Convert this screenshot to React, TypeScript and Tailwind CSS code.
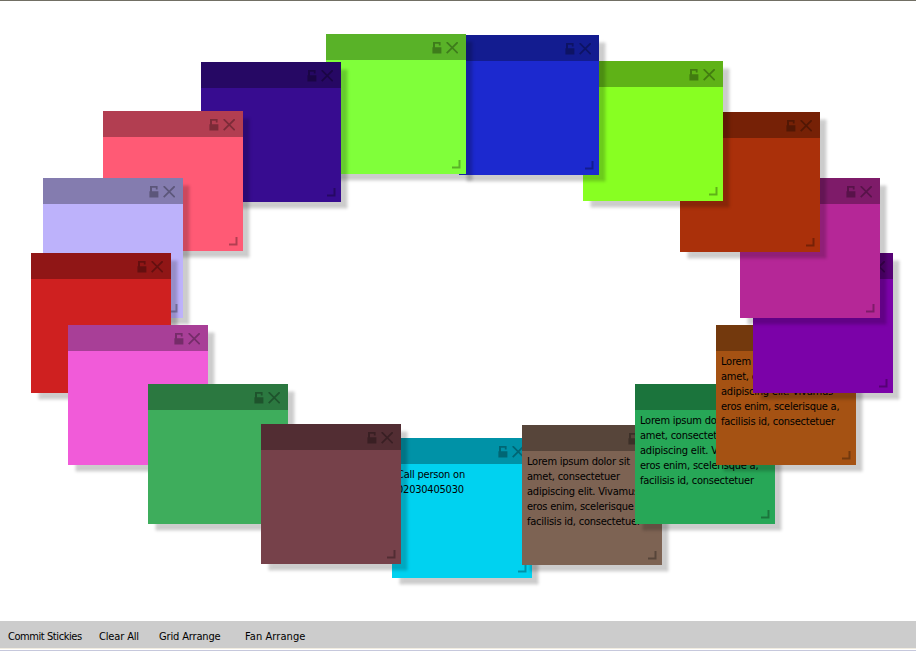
type Note = { x: number; y: number; color: string; lines?: string[] };

const lorem = [
  'Lorem ipsum dolor sit',
  'amet, consectetuer',
  'adipiscing elit. Vivamus',
  'eros enim, scelerisque a,',
  'facilisis id, consectetuer',
];

// Ordered from the back of the fan to the front.
const notes: Note[] = [
  { x: 392, y: 437, color: 'bg-[#00d2f0]', lines: ['Call person on', '02030405030'] },
  { x: 522, y: 424, color: 'bg-[#7d6353]', lines: lorem },
  { x: 635, y: 383, color: 'bg-[#27a757]', lines: lorem },
  { x: 716, y: 324, color: 'bg-[#a55213]', lines: lorem },
  { x: 753, y: 252, color: 'bg-[#7b02a8]' },
  { x: 740, y: 177, color: 'bg-[#b52797]' },
  { x: 680, y: 111, color: 'bg-[#aa300a]' },
  { x: 583, y: 60, color: 'bg-[#88ff22]' },
  { x: 459, y: 34, color: 'bg-[#1c29cf]' },
  { x: 326, y: 33, color: 'bg-[#80ff3a]' },
  { x: 201, y: 61, color: 'bg-[#370c90]' },
  { x: 103, y: 110, color: 'bg-[#ff5a75]' },
  { x: 43, y: 177, color: 'bg-[#bdb2fb]' },
  { x: 31, y: 252, color: 'bg-[#cf2020]' },
  { x: 68, y: 324, color: 'bg-[#f15bd9]' },
  { x: 148, y: 383, color: 'bg-[#3ead5c]' },
  { x: 261, y: 423, color: 'bg-[#76414a]' },
];

function LockIcon() {
  return (
    <svg width="10" height="12" viewBox="0 0 10 12" className="fill-black/30">
      <path d="M1 0h7.6v3.4h-1.8v-1.6h-3.8v3.4h6.4v6.3h-9v-6.3h0.6z" />
    </svg>
  );
}

function CloseIcon() {
  return (
    <svg width="12" height="12" viewBox="0 0 12 12" className="fill-none stroke-black/30">
      <path d="M0.7 0.2l11 11M11.7 0.2l-11 11" strokeWidth="1.8" />
    </svg>
  );
}

function Sticky({ note }: { note: Note }) {
  return (
    <section
      className={`absolute h-[140px] w-[140px] shadow-[6.5px_6.5px_3px_rgba(0,0,0,0.2)] ${note.color}`}
      style={{ left: note.x, top: note.y }}
    >
      <header className="flex h-[26px] items-start justify-end gap-[4px] bg-black/30 pt-[8px] pr-[8px]">
        <LockIcon />
        <CloseIcon />
      </header>
      {note.lines && (
        <div className="pt-[3px] pl-[5px] text-[11px] leading-[15px] tracking-[-0.22px] whitespace-nowrap text-black">
          {note.lines.map((line) => (
            <p key={line}>{line}</p>
          ))}
        </div>
      )}
      <svg width="9" height="9" viewBox="0 0 9 9" className="absolute right-[5px] bottom-[5px] fill-none stroke-black/30">
        <path d="M7.5 0v7.5H0" strokeWidth="2" />
      </svg>
    </section>
  );
}

export default function App() {
  return (
    <div className="flex h-[651px] w-[916px] flex-col overflow-hidden bg-white font-['DejaVu_Sans_Condensed','DejaVu_Sans',sans-serif]">
      <div className="h-px shrink-0 bg-[#716f64]" />
      <main className="relative h-[620px] shrink-0">
        {notes.map((note) => (
          <Sticky key={`${note.x}-${note.y}`} note={note} />
        ))}
      </main>
      <nav className="flex h-[27px] shrink-0 items-center bg-[#cccccc] pt-[5px] pl-[8px] text-[11px] whitespace-nowrap text-black">
        <button className="w-[91px] text-left tracking-[-0.43px]">Commit Stickies</button>
        <button className="w-[60px] text-left tracking-[-0.15px]">Clear All</button>
        <button className="w-[86px] text-left tracking-[-0.15px]">Grid Arrange</button>
        <button className="text-left tracking-[0.08px]">Fan Arrange</button>
      </nav>
      <div className="h-px shrink-0 bg-[#f1ece0]" />
      <div className="h-px shrink-0 bg-white" />
      <div className="h-px shrink-0 bg-[#c6c8dc]" />
    </div>
  );
}
